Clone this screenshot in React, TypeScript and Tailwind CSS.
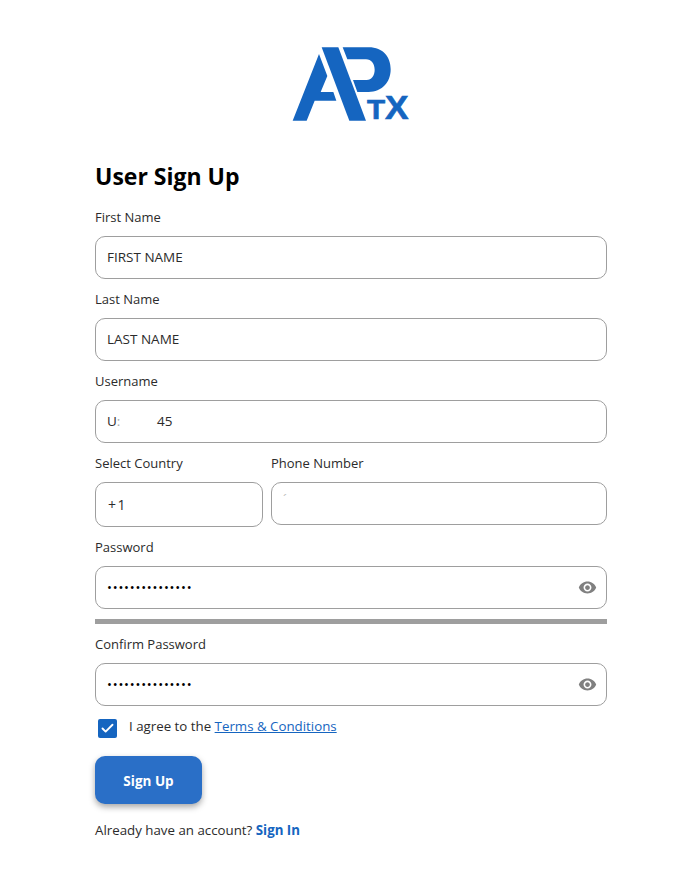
import { ReactNode } from 'react';
import { MdVisibility } from 'react-icons/md';
import { Check } from 'lucide-react';

function Logo() {
  return (
    <svg width="160" height="110" viewBox="0 0 480 330" className="block">
      {/* left leg of the A */}
      <path d="M68 272 L147 72 L172 138 L152 186 L190 186 L199 212 L134 212 L110 272 Z" fill="#1565c0" />
      {/* right leg of the A */}
      <path d="M155 52 L205 52 L288 272 L238 272 Z" fill="#1565c0" />
      {/* bowl of the P */}
      <path d="M218 52 L296 52 C340 52 362 82 362 118 C362 158 335 186 296 186 L262 186 L249 150 L290 150 C305 150 314 136 314 119 C314 102 304 88 288 88 L232 88 Z" fill="#1565c0" />
      <text x="291" y="268" fontFamily="'Liberation Sans', sans-serif" fontWeight="700" fill="#1565c0" stroke="#1565c0" strokeWidth="2" textLength="125" lengthAdjust="spacingAndGlyphs">
        <tspan fontSize="84">T</tspan>
        <tspan fontSize="100">X</tspan>
      </text>
    </svg>
  );
}

function Field({ label, children, className = '' }: { label: string; children: ReactNode; className?: string }) {
  return (
    <div className={`flex flex-col ${className}`}>
      <label className="h-5 mb-[9px] text-[13px] leading-5 text-[#2b2b2b]">{label}</label>
      {children}
    </div>
  );
}

function Box({ children, tall }: { children?: ReactNode; tall?: boolean }) {
  return (
    <div className={`flex items-center justify-between px-[11px] border border-[#9e9e9e] rounded-[10px] bg-white text-[13.5px] text-[#2b2b2b] ${tall ? 'h-[45px]' : 'h-[43px]'}`}>
      {children}
    </div>
  );
}

function PasswordBox() {
  return (
    <Box>
      <span className="text-[13px] text-black tracking-[0.8px]">•••••••••••••••</span>
      <MdVisibility className="text-[#808080] -mr-[2px]" size={19} />
    </Box>
  );
}

export default function App() {
  return (
    <div className="min-h-[881px] bg-white flex flex-col items-center pl-[18px] pt-[30px] font-['Open_Sans',sans-serif]">
      <div className="w-[160px] h-[110px] -ml-[2px]">
        <Logo />
      </div>

      <div className="w-[512px] flex flex-col">
        <h1 className="mt-[18px] mb-[13px] h-9 text-[23px] leading-9 font-bold text-black">User Sign Up</h1>

        <Field label="First Name" className="mb-[10px]">
          <Box>FIRST NAME</Box>
        </Field>
        <Field label="Last Name" className="mb-[10px]">
          <Box>LAST NAME</Box>
        </Field>
        <Field label="Username" className="mb-[10px]">
          <Box>
            <span className="flex">
              <span className="w-[13px]">
                U<span className="text-[#aaaaaa]">:</span>
              </span>
              <span className="ml-[37px]">45</span>
            </span>
          </Box>
        </Field>

        <div className="flex gap-2 mb-[10px] items-start">
          <Field label="Select Country" className="w-[168px]">
            <Box tall>
              <span className="ml-[1px] tracking-[1.5px] text-[14px]">+1</span>
            </Box>
          </Field>
          <Field label="Phone Number" className="flex-1">
            <Box>
              <span className="text-[#bdbdbd] -mt-2">´</span>
            </Box>
          </Field>
        </div>

        <Field label="Password">
          <PasswordBox />
        </Field>
        <div className="mt-[10px] mb-[10px] h-[5px] bg-[#9e9e9e]" />

        <Field label="Confirm Password">
          <PasswordBox />
        </Field>

        <div className="mt-3 flex items-center h-5 text-[13.3px] text-[#2b2b2b]">
          <span className="ml-[3px] w-[19px] h-[19px] rounded-[2px] bg-[#1565c0] flex items-center justify-center">
            <Check className="text-white" size={15} strokeWidth={3} />
          </span>
          <span className="ml-[12px] mb-[2px]">
            I agree to the <a className="text-[#1565c0] underline">Terms &amp; Conditions</a>
          </span>
        </div>

        <button className="mt-[18px] w-[107px] h-12 pt-[3px] rounded-[10px] bg-[#2a6fc7] text-white text-[13.5px] font-bold shadow-[0_3px_6px_rgba(0,0,0,0.35)]">
          Sign Up
        </button>

        <p className="mt-4 text-[13.3px] leading-5 text-[#2b2b2b]">
          Already have an account? <a className="text-[#1565c0] font-bold">Sign In</a>
        </p>
      </div>
    </div>
  );
}
